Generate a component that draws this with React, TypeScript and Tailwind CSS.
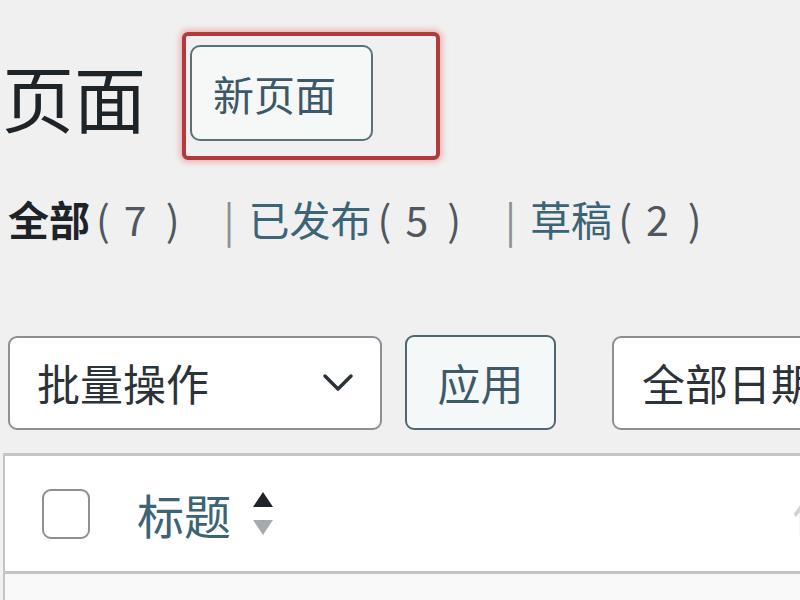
const ChevronDown = () => (
  <svg width="32" height="22" viewBox="0 0 32 22" fill="none">
    <path d="M3 4 L16 17 L29 4" stroke="#2c3338" strokeWidth="3.5" strokeLinecap="round" strokeLinejoin="round" />
  </svg>
);

const SortArrows = () => (
  <svg width="24" height="48" viewBox="0 0 24 48">
    <path d="M12 2 L22 17 L2 17 Z" fill="#1d2327" />
    <path d="M2 30 L22 30 L12 45 Z" fill="#a7aaad" />
  </svg>
);

const Count = ({ n }: { n: number }) => (
  <span className="flex items-center text-[#50575e]">
    <span className="ml-[6px]">(</span>
    <span className="ml-[14px]">{n}</span>
    <span className="ml-[19px]">)</span>
  </span>
);

const Sep = () => <span className="ml-[44px] mr-[14px] text-[#8c8f94]">|</span>;

const App = () => {
  return (
    <div
      className="w-[800px] h-[600px] overflow-hidden bg-[#f0f0f1] text-[#1d2327]"
      style={{ fontFamily: '"Noto Sans CJK SC", "Noto Sans", sans-serif' }}
    >
      {/* title + add new */}
      <div className="flex items-center pt-[32px] pl-[2px]">
        <h1 className="text-[72px] leading-none font-normal">页面</h1>
        <div className="ml-[36px] border-[4px] border-[#b23a3a] rounded-[6px] pt-[9px] pl-[4px] pr-[63px] pb-[15px] shadow-[0_0_6px_2px_rgba(225,90,90,0.45)]">
          <a
            href="#"
            className="flex items-center w-[183px] h-[96px] pl-[21px] border-2 border-[#58717c] rounded-[10px] bg-[#f6f7f7] text-[41px] leading-none text-[#3d5866]"
          >
            新页面
          </a>
        </div>
      </div>

      {/* status filters */}
      <ul className="flex items-center h-[48px] mt-[34px] pl-[8px] text-[41px] leading-none">
        <li className="flex items-center">
          <a href="#" className="font-bold text-[#1d2327]">全部</a>
          <Count n={7} />
          <Sep />
        </li>
        <li className="flex items-center">
          <a href="#" className="text-[#3b6475]">已发布</a>
          <Count n={5} />
          <Sep />
        </li>
        <li className="flex items-center">
          <a href="#" className="text-[#3b6475]">草稿</a>
          <Count n={2} />
        </li>
      </ul>

      {/* bulk actions */}
      <div className="flex items-center mt-[93px] pl-[8px]">
        <div className="flex shrink-0 items-center justify-between w-[374px] h-[94px] pl-[27px] pr-[26px] border-2 border-[#8c8f94] rounded-[9px] bg-white text-[43px] leading-none text-[#2c3338] whitespace-nowrap">
          <span>批量操作</span>
          <ChevronDown />
        </div>
        <button className="ml-[23px] shrink-0 w-[151px] h-[95px] border-2 border-[#4f6670] rounded-[9px] bg-[#f4f8f9] text-[43px] leading-none text-[#3f5a66] whitespace-nowrap">
          应用
        </button>
        <div className="ml-[56px] shrink-0 flex items-center w-[374px] h-[94px] pl-[28px] border-2 border-[#8c8f94] rounded-[9px] bg-white text-[43px] leading-none text-[#2c3338] whitespace-nowrap">
          <span>全部日期</span>
        </div>
      </div>

      {/* table header */}
      <div className="mt-[23px] ml-[3px] border-l-2 border-t-[3px] border-[#c3c4c7] bg-white">
        <div className="flex items-center h-[118px] border-b-[3px] border-[#c3c4c7] overflow-hidden">
          <div className="ml-[37px] w-[48px] h-[50px] border-2 border-[#8c8f94] rounded-[9px] bg-white shrink-0" />
          <a href="#" className="ml-[47px] text-[47px] leading-none text-[#3b6475] whitespace-nowrap">标题</a>
          <span className="ml-[20px] flex items-center">
            <SortArrows />
          </span>
          <span className="ml-auto mr-[-80px] text-[44px] leading-none text-[#d0d2d4] whitespace-nowrap">作者</span>
        </div>
        <div className="h-[40px] bg-[#f9f9f9]" />
      </div>
    </div>
  );
};

export default App;
